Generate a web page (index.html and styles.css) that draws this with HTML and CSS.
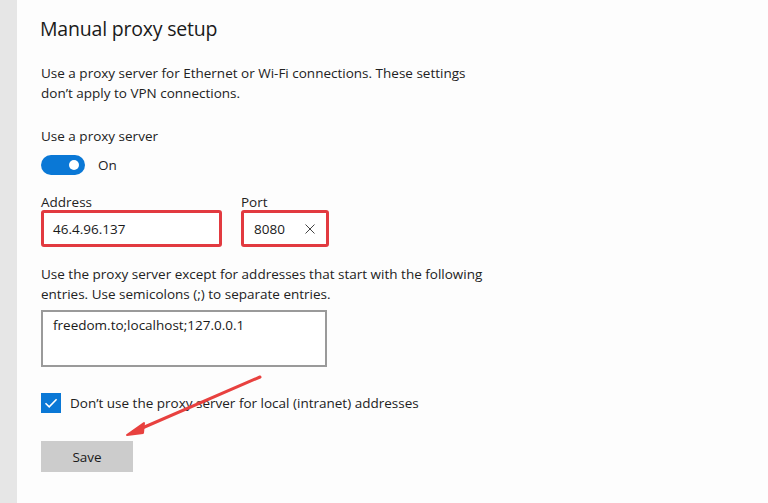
FILE: index.html
```html
<!DOCTYPE html>
<html>
<head>
<meta charset="utf-8">
<link rel="stylesheet" href="styles.css">
</head>
<body>
<div class="app">
  <aside class="side"></aside>
  <main class="content">
    <h1 class="title">Manual proxy setup</h1>
    <p class="desc">Use a proxy server for Ethernet or Wi-Fi connections. These settings<br>don’t apply to VPN connections.</p>
    <div class="label toggle-label">Use a proxy server</div>
    <div class="toggle-row">
      <span class="toggle"><span class="knob"></span></span>
      <span class="toggle-text">On</span>
    </div>
    <div class="fields">
      <div class="field">
        <div class="label">Address</div>
        <div class="input addr hl">46.4.96.137</div>
      </div>
      <div class="field">
        <div class="label">Port</div>
        <div class="input port hl"><span>8080</span><svg class="clear" width="10" height="10" viewBox="0 0 10 10"><path d="M0.5 0.5 L9.5 9.5 M9.5 0.5 L0.5 9.5" stroke="#444" stroke-width="1"/></svg></div>
      </div>
    </div>
    <p class="desc desc2">Use the proxy server except for addresses that start with the following<br>entries. Use semicolons (;) to separate entries.</p>
    <div class="textarea">freedom.to;localhost;127.0.0.1</div>
    <div class="check-row">
      <span class="checkbox"><svg width="20" height="20" viewBox="0 0 20 20"><path d="M4.5 10.2 L8.2 13.9 L15.6 6.2" fill="none" stroke="#fff" stroke-width="1.6"/></svg></span>
      <span class="check-text">Don’t use the proxy server for local (intranet) addresses</span>
    </div>
    <button class="save">Save</button>
  </main>
  <svg class="arrow" width="768" height="503" viewBox="0 0 768 503">
    <line x1="260" y1="377" x2="133" y2="432" stroke="#e8413f" stroke-width="3" stroke-linecap="round"/>
    <path d="M127 435 L144 423 L143 433 Z" fill="#e8413f" stroke="#e8413f" stroke-width="2" stroke-linejoin="round"/>
  </svg>
</div>
</body>
</html>
```
FILE: styles.css
```css
html, body {
  margin: 0;
  padding: 0;
}
body {
  width: 768px;
  height: 503px;
  overflow: hidden;
  background: #fdfdfd;
  font-family: "Open Sans", "Noto Sans", sans-serif;
  color: #1a1a1a;
}
.app {
  position: relative;
  display: flex;
  height: 503px;
}
.side {
  width: 17px;
  background: #e6e6e6;
  flex: none;
}
.content {
  padding-left: 24px;
  flex: 1;
}
.title {
  margin: 14px 0 0 -1px;
  font-size: 19.5px;
  font-weight: 400;
  line-height: 30px;
  letter-spacing: -0.2px;
}
.desc {
  margin: 19px 0 0;
  font-size: 13.5px;
  line-height: 20px;
  color: #222;
}
.label {
  font-size: 13.5px;
  line-height: 20px;
  color: #222;
}
.toggle-label {
  margin-top: 23px;
}
.toggle-row {
  display: flex;
  align-items: center;
  margin-top: 9px;
  height: 20px;
}
.toggle {
  position: relative;
  width: 44px;
  height: 20px;
  border-radius: 10px;
  background: #0a78d6;
  flex: none;
}
.knob {
  position: absolute;
  right: 6px;
  top: 5px;
  width: 10px;
  height: 10px;
  border-radius: 50%;
  background: #fff;
}
.toggle-text {
  margin-left: 13px;
  font-size: 13.5px;
  color: #222;
}
.fields {
  display: flex;
  gap: 19px;
  margin-top: 19px;
}
.field .label {
  line-height: 16px;
}
.input {
  box-sizing: border-box;
  height: 37px;
  background: #fff;
  border: 3px solid #e23a40;
  border-radius: 3px;
  font-size: 13.5px;
  display: flex;
  align-items: center;
  color: #1a1a1a;
}
.addr {
  width: 181px;
  padding-left: 9px;
}
.port {
  width: 88px;
  padding-left: 10px;
  justify-content: space-between;
  padding-right: 11px;
}
.clear {
  display: block;
}
.desc2 {
  margin-top: 17px;
}
.textarea {
  box-sizing: border-box;
  margin-top: 6px;
  width: 286px;
  height: 57px;
  border: 2px solid #9a9a9a;
  background: #fff;
  font-size: 13.5px;
  padding: 3px 10px;
  line-height: 20px;
}
.check-row {
  display: flex;
  align-items: center;
  margin-top: 26px;
}
.checkbox {
  width: 20px;
  height: 20px;
  background: #0a78d6;
  display: block;
  flex: none;
}
.checkbox svg {
  display: block;
}
.check-text {
  margin-left: 9px;
  font-size: 13.5px;
  color: #222;
}
.save {
  display: block;
  margin-top: 28px;
  width: 92px;
  height: 31px;
  border: none;
  background: #cccccc;
  font-family: inherit;
  font-size: 13.5px;
  color: #1a1a1a;
  padding: 0;
}
.arrow {
  position: absolute;
  left: 0;
  top: 0;
  pointer-events: none;
}
```
